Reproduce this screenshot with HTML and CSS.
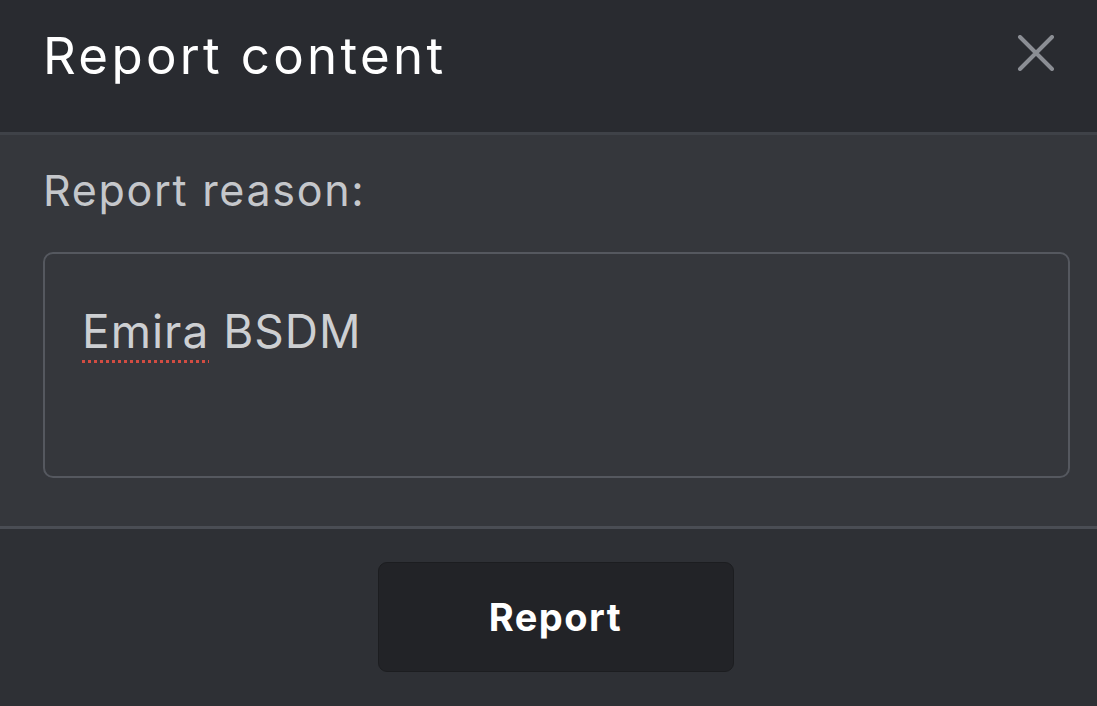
FILE: index.html
```html
<!DOCTYPE html>
<html lang="en">
<head>
  <meta charset="UTF-8">
  <meta name="viewport" content="width=device-width, initial-scale=1.0">
  <title>Report content</title>
  <link rel="stylesheet" href="styles.css">
</head>
<body>
<div class="modal">
  <div class="modal-header">
    <h1 class="modal-title">Report content</h1>
    <button class="close" aria-label="Close">
      <svg width="38" height="36" viewBox="0 0 38 36">
        <path d="M3 2 L35 34 M35 2 L3 34" stroke="#8b8e94" stroke-width="4" stroke-linecap="round"/>
      </svg>
    </button>
  </div>

  <div class="modal-body">
    <label class="reason-label">Report reason:</label>
    <div class="reason-box"><span class="misspelt">Emira</span> BSDM</div>
  </div>

  <div class="modal-footer">
    <button class="report-btn">Report</button>
  </div>
</div>
</body>
</html>
```

FILE: styles.css
```css
body { margin: 0; background: #2e3035; font-family: Inter, "Noto Sans", sans-serif; }
.modal { display: flex; flex-direction: column; height: 706px; }
.modal-header { display: flex; align-items: center; justify-content: space-between; height: 135px; padding: 0 42px 0 43px; background: #292b30; border-bottom: 3px solid #3f4248; box-sizing: border-box; }
.modal-title { margin: 0; font-size: 51px; font-weight: 400; color: #fff; letter-spacing: 3.3px; margin-top: -22px; }
.close { background: none; border: 0; padding: 0; margin-top: -24px; cursor: pointer; }
.modal-body { background: #35373c; padding: 24px 27px 48px 43px; border-bottom: 3px solid #4a4d54; }
.reason-label { display: block; font-size: 43px; color: #c5c7cb; line-height: 62px; margin-bottom: 31px; letter-spacing: 1.7px; }
.reason-box { height: 226px; box-sizing: border-box; border: 2px solid #55585f; border-radius: 10px; padding: 47px 37px; font-size: 46px; color: #cdcfd2; line-height: 60px; letter-spacing: 1px; }
.misspelt { text-decoration: underline dotted #d24c42 3px; text-underline-offset: 12px; }
.modal-footer { flex: 1; display: flex; justify-content: center; align-items: flex-start; padding: 33px 0 0 14px; background: #2e3035; }
.report-btn { width: 356px; height: 110px; background: #222327; border: 1px solid #1c1d20; border-radius: 9px; color: #fff; font-family: Inter, "Noto Sans", sans-serif; font-size: 38px; font-weight: 700; letter-spacing: 1.5px; cursor: pointer; }
```
